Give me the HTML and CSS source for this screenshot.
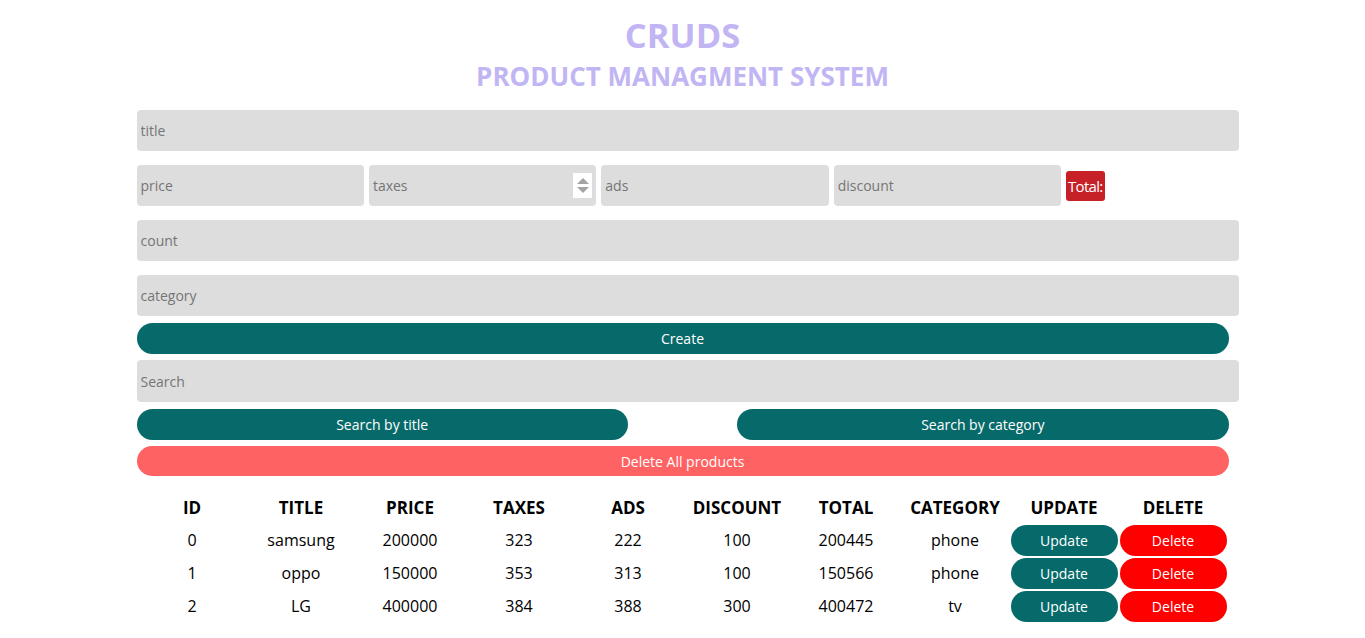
FILE: index.html
```html
<!DOCTYPE html>
<html lang="en">
<head>
<meta charset="utf-8">
<title>CRUDS</title>
<link rel="stylesheet" href="styles.css">
</head>
<body>
<div class="crud">
  <div class="head">
    <h1 class="title">CRUDS</h1>
    <h2 class="subtitle">PRODUCT MANAGMENT SYSTEM</h2>
  </div>
  <div class="form">
    <input class="field wide" type="text" placeholder="title">
    <div class="price-row">
      <input class="field small" type="text" placeholder="price">
      <div class="num-wrap">
        <input class="field small" type="text" placeholder="taxes">
        <span class="spinner"><span class="up"></span><span class="down"></span></span>
      </div>
      <input class="field small" type="text" placeholder="ads">
      <input class="field small" type="text" placeholder="discount">
      <span class="total">Total:</span>
    </div>
    <input class="field wide" type="text" placeholder="count">
    <input class="field wide last" type="text" placeholder="category">
    <button class="btn create">Create</button>
    <input class="field wide search" type="text" placeholder="Search">
    <div class="search-btns">
      <button class="btn">Search by title</button>
      <button class="btn">Search by category</button>
    </div>
    <button class="btn delete-all">Delete All products</button>
  </div>
  <table class="products">
    <thead>
      <tr><th>ID</th><th>TITLE</th><th>PRICE</th><th>TAXES</th><th>ADS</th><th>DISCOUNT</th><th>TOTAL</th><th>CATEGORY</th><th>UPDATE</th><th>DELETE</th></tr>
    </thead>
    <tbody>
      <tr><td>0</td><td>samsung</td><td>200000</td><td>323</td><td>222</td><td>100</td><td>200445</td><td>phone</td><td><button class="btn row-btn">Update</button></td><td><button class="btn row-btn del">Delete</button></td></tr>
      <tr><td>1</td><td>oppo</td><td>150000</td><td>353</td><td>313</td><td>100</td><td>150566</td><td>phone</td><td><button class="btn row-btn">Update</button></td><td><button class="btn row-btn del">Delete</button></td></tr>
      <tr><td>2</td><td>LG</td><td>400000</td><td>384</td><td>388</td><td>300</td><td>400472</td><td>tv</td><td><button class="btn row-btn">Update</button></td><td><button class="btn row-btn del">Delete</button></td></tr>
    </tbody>
  </table>
</div>
</body>
</html>
```
FILE: styles.css
```css
* { box-sizing: border-box; }
body {
  margin: 0;
  background: #fff;
  font-family: "Open Sans", "Noto Sans", sans-serif;
  color: #000;
}
.crud {
  width: 80%;
  margin: 0 auto;
}
.head { text-align: center; color: #c2b5f3; }
.title {
  margin: 15px 0 0;
  font-size: 34.5px;
  line-height: 40px;
  font-weight: 700;
}
.subtitle {
  margin: 6px 0 0;
  font-size: 26px;
  line-height: 30px;
  font-weight: 700;
}
.form {
  margin-top: 19px;
  display: flex;
  flex-direction: column;
  align-items: flex-start;
}
.field {
  height: 41px;
  border: none;
  outline: none;
  background: #dddddd;
  border-radius: 4px;
  padding: 0 4px;
  font-family: inherit;
  font-size: 14px;
  color: #333;
}
.field::placeholder { color: #757575; }
.wide {
  width: calc(100% + 10px);
  margin-bottom: 14px;
}
.wide.last { margin-bottom: 7px; }
.wide.search { margin-bottom: 7px; height: 42px; }
.price-row {
  display: flex;
  align-items: center;
  gap: 5px;
  width: 100%;
  margin-bottom: 14px;
}
.small { width: calc(20% + 9px); }
.num-wrap {
  position: relative;
  width: calc(20% + 9px);
  display: flex;
}
.num-wrap .small { width: 100%; }
.spinner {
  position: absolute;
  right: 4px;
  top: 8px;
  width: 19px;
  height: 25px;
  background: #fff;
  display: flex;
  flex-direction: column;
  align-items: center;
  justify-content: center;
  gap: 3px;
}
.spinner .up, .spinner .down {
  width: 0; height: 0;
  border-left: 6px solid transparent;
  border-right: 6px solid transparent;
}
.spinner .up { border-bottom: 6px solid #a3a3a3; }
.spinner .down { border-top: 6px solid #a3a3a3; }
.total {
  height: 30px;
  padding: 0 2px;
  background: #c62127;
  color: #fff;
  border-radius: 3px;
  font-size: 15px;
  line-height: 30px;
  letter-spacing: -0.7px;
}
.btn {
  border: none;
  background: #076a6a;
  color: #fff;
  font-family: inherit;
  font-size: 14px;
  border-radius: 16px;
  height: 31px;
  padding: 0;
  cursor: pointer;
}
.create { width: 100%; margin-bottom: 6px; }
.search-btns {
  width: 100%;
  display: flex;
  justify-content: space-between;
  margin-bottom: 6px;
}
.search-btns .btn { width: 45%; }
.delete-all {
  width: 100%;
  height: 30px;
  background: #ff6262;
}
.products {
  width: 100%;
  margin-top: 14px;
  border-spacing: 2px;
  table-layout: fixed;
  text-align: center;
}
.products th {
  height: 31px;
  padding: 0;
  font-size: 17px;
  font-weight: 700;
}
.products td {
  height: 31px;
  padding: 0;
  font-size: 16px;
  line-height: 31px;
}
.row-btn { width: 100%; }
.row-btn.del { background: #ff0000; }
```
